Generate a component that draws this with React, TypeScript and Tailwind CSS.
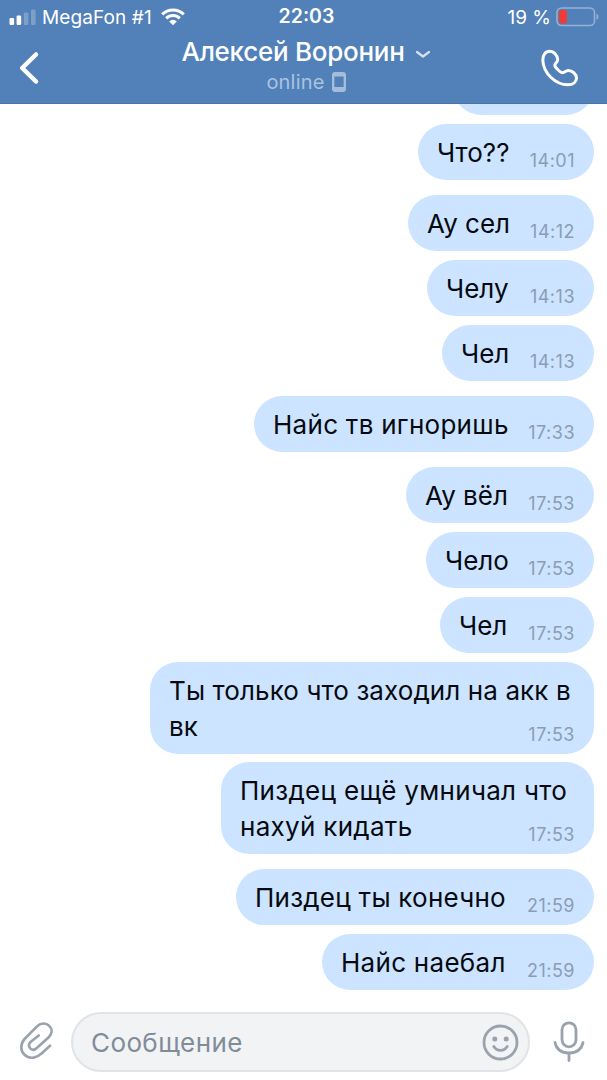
import clsx from 'clsx';

interface Message {
  id: number;
  lines: string[];
  time: string;
  size: string;
  spacing: string;
  tracking?: string;
}

const messages: Message[] = [
  { id: 1, lines: ['Что??'], time: '14:01', size: 'w-[176px] h-14', spacing: 'mt-[9px]' },
  { id: 2, lines: ['Ау сел'], time: '14:12', size: 'w-[186px] h-14', spacing: 'mt-[15px]' },
  { id: 3, lines: ['Челу'], time: '14:13', size: 'w-[167px] h-14', spacing: 'mt-[9px]' },
  { id: 4, lines: ['Чел'], time: '14:13', size: 'w-[152px] h-14', spacing: 'mt-[9px]' },
  { id: 5, lines: ['Найс тв игноришь'], time: '17:33', size: 'w-[340px] h-14', spacing: 'mt-[15px]', tracking: 'tracking-[0.28px]' },
  { id: 6, lines: ['Ау вёл'], time: '17:53', size: 'w-[188px] h-14', spacing: 'mt-[15px]' },
  { id: 7, lines: ['Чело'], time: '17:53', size: 'w-[168px] h-14', spacing: 'mt-[9px]' },
  { id: 8, lines: ['Чел'], time: '17:53', size: 'w-[154px] h-14', spacing: 'mt-[9px]' },
  { id: 9, lines: ['Ты только что заходил на акк в', 'вк'], time: '17:53', size: 'w-[444px] h-[92px]', spacing: 'mt-[9px]', tracking: 'tracking-[0.1px]' },
  { id: 10, lines: ['Пиздец ещё умничал что', 'нахуй кидать'], time: '17:53', size: 'w-[373px] h-[92px]', spacing: 'mt-2', tracking: 'tracking-[0.3px]' },
  { id: 11, lines: ['Пиздец ты конечно'], time: '21:59', size: 'w-[358px] h-14', spacing: 'mt-[15px]', tracking: 'tracking-[0.25px]' },
  { id: 12, lines: ['Найс наебал'], time: '21:59', size: 'w-[272px] h-14', spacing: 'mt-[9px]', tracking: 'tracking-[0.28px]' },
];

function Signal() {
  return (
    <svg width="28" height="17" viewBox="0 0 28 17" fill="#fff">
      <rect x="0.5" y="9" width="4.6" height="7" rx="1.2" />
      <rect x="7.6" y="6.5" width="4.6" height="9.5" rx="1.2" />
      <rect x="14.8" y="3.5" width="4.6" height="12.5" rx="1.2" opacity="0.25" />
      <rect x="22" y="0.5" width="4.6" height="15.5" rx="1.2" opacity="0.25" />
    </svg>
  );
}

function Wifi() {
  return (
    <svg width="24" height="18" viewBox="0 0 24 18" fill="none" stroke="#fff" strokeWidth="3">
      <path d="M1.2 6.4a15.3 15.3 0 0 1 21.6 0" />
      <path d="M5.2 10.4a9.6 9.6 0 0 1 13.6 0" />
      <path d="M12 17.2 8.2 13.4a5.4 5.4 0 0 1 7.6 0z" fill="#fff" stroke="none" />
    </svg>
  );
}

function Battery() {
  return (
    <svg width="44" height="20" viewBox="0 0 44 20">
      <rect x="1" y="1" width="37.5" height="17.5" rx="4.5" fill="none" stroke="#97b3d4" strokeWidth="1.5" />
      <rect x="3" y="3" width="8" height="13.5" rx="2" fill="#f03b36" />
      <path d="M40.5 6.8c2.5 1 2.5 5 0 6z" fill="#97b3d4" />
    </svg>
  );
}

function Header() {
  return (
    <header className="h-[104px] shrink-0 border-b border-[#4874a6] bg-[#5181b8] text-white">
      <div className="grid h-[34px] grid-cols-3 items-center pl-[9px] pr-[7px] text-[19px] leading-none">
        <div className="flex items-center whitespace-nowrap">
          <Signal />
          <span className="ml-[5px] tracking-[0.1px]">MegaFon #1</span>
          <span className="ml-[9px]"><Wifi /></span>
        </div>
        <span className="pl-1 text-center text-[19.5px] font-semibold">22:03</span>
        <div className="flex items-center justify-end">
          <span>19 %</span>
          <span className="ml-[5px]"><Battery /></span>
        </div>
      </div>
      <div className="flex h-[69px] items-start justify-between pl-[18px] pr-[28px]">
        <button className="mt-[16px] w-[53px]" aria-label="Назад">
          <svg width="22" height="36" viewBox="0 0 22 36" fill="none" stroke="#fff" strokeWidth="4.5" strokeLinecap="round" strokeLinejoin="round">
            <path d="M18 4.5 4.200 18l13.800 13.500" />
          </svg>
        </button>
        <div className="flex flex-col items-center">
          <div className="mt-[2px] flex h-8 items-center">
            <h1 className="whitespace-nowrap text-[26px] font-medium leading-8 tracking-[-0.27px]">Алексей Воронин</h1>
            <svg className="ml-[10px] mt-1" width="16" height="9" viewBox="0 0 16 9" fill="none" stroke="#d5e1ee" strokeWidth="2.2" strokeLinecap="round" strokeLinejoin="round">
              <path d="M2 2l6 4.5L14 2" />
            </svg>
          </div>
          <div className="flex h-[27px] items-center text-[20px] text-[#a9c3e1]">
            <span className="tracking-[0.2px]">online</span>
            <svg className="ml-[7px] mt-px" width="14" height="20" viewBox="0 0 14 20">
              <path fillRule="evenodd" fill="#a3bddc" d="M3 0h8a3 3 0 0 1 3 3v14a3 3 0 0 1-3 3H3a3 3 0 0 1-3-3V3a3 3 0 0 1 3-3zM2.4 4.5v10.5h9.2V4.5z" />
            </svg>
          </div>
        </div>
        <button className="mt-[15px]" aria-label="Позвонить">
          <svg width="38" height="38" viewBox="0 0 38 38" fill="none" stroke="#fff" strokeWidth="3" strokeLinejoin="round">
            <path d="M8.500 2.200C4.500 2.200 1.500 6 1.800 11.500C2.600 24.500 14.500 35.800 27 35.800C32 35.800 35.500 33 35.500 29C35.500 25 31 21.500 27.500 21.500C24.500 21.500 23.500 23.700 21.500 23.700C19.500 23.700 13.800 18.300 13.800 16.200C13.800 14.400 16.700 13.500 16.700 10.500C16.700 7 13 2.200 8.500 2.200Z" />
          </svg>
        </button>
      </div>
    </header>
  );
}

function Bubble({ message }: { message: Message }) {
  return (
    <div
      className={clsx(
        'flex shrink-0 items-end justify-between rounded-[28px] bg-[#cce4ff] px-[19px] pb-[9px]',
        message.size,
        message.spacing
      )}
    >
      <p className={clsx('whitespace-nowrap text-[26px] leading-9 text-[#060a10]', message.tracking)}>
        {message.lines.map(line => (
          <span key={line} className="block">{line}</span>
        ))}
      </p>
      {/* the long first line runs over the column of the time */}
      <time className="-mb-0.5 -ml-20 text-[18px] leading-6 tracking-[0.5px] text-[#8b9db4]">{message.time}</time>
    </div>
  );
}

function Composer() {
  return (
    <footer className="flex h-[90px] shrink-0 items-center pl-[19px] pr-[22px] pt-[14px]">
      <button className="-mt-1" aria-label="Прикрепить">
        <svg width="34" height="38" viewBox="0 0 34 38" fill="none" stroke="#99a2ad" strokeWidth="2.6" strokeLinecap="round" strokeLinejoin="round">
          <path d="M31 24.700 22.300 32.700C17 38 10 38 5.500 33.800C1 29.500 1.300 22.500 6 17.500L17.500 5.800C21.500 1.700 27 1.500 30.300 4.800C33.500 8 33.300 12.500 30 16L17.500 27.300C15.500 29.200 13 29 11.300 27.300C9.600 25.500 9.600 23 11.500 21L19.800 14.500" />
        </svg>
      </button>
      <div className="ml-[18px] flex h-[60px] w-[459px] items-center justify-between rounded-full border-2 border-[#e1e3e6] bg-[#f2f3f5] pl-[18px] pr-[9px]">
        <span className="text-[26px] tracking-[0.4px] text-[#818c99]">Сообщение</span>
        <svg width="37" height="37" viewBox="0 0 37 37" fill="none" stroke="#99a2ad" strokeWidth="2.8" strokeLinecap="round">
          <circle cx="18.5" cy="18.5" r="16.5" />
          <circle cx="12.8" cy="15" r="2.5" fill="#99a2ad" stroke="none" />
          <circle cx="24.2" cy="15" r="2.5" fill="#99a2ad" stroke="none" />
          <path d="M11.800 22.500c3.500 5.200 9.900 5.200 13.400 0" />
        </svg>
      </div>
      <button className="-mt-0.5 ml-auto" aria-label="Голосовое сообщение">
        <svg width="32" height="41" viewBox="0 0 32 41" fill="none" stroke="#99a2ad" strokeWidth="2.8" strokeLinecap="round">
          <rect x="9" y="1.8" width="14" height="24" rx="7" />
          <path d="M2 21.500c1.500 7 7 10.500 14 10.500S28.500 28.500 30 21.500M16 32v7.500" />
        </svg>
      </button>
    </footer>
  );
}

export default function App() {
  return (
    <div className="flex h-[1080px] w-[607px] flex-col overflow-hidden bg-white font-['Inter','Noto_Sans',sans-serif]">
      <Header />
      <main className="flex min-h-0 flex-1 flex-col items-end justify-end overflow-hidden pr-[13px]">
        {/* previous message, scrolled under the header */}
        <div className="h-14 w-[141px] shrink-0 rounded-[28px] bg-[#cce4ff]" />
        {messages.map(message => (
          <Bubble key={message.id} message={message} />
        ))}
      </main>
      <Composer />
    </div>
  );
}
